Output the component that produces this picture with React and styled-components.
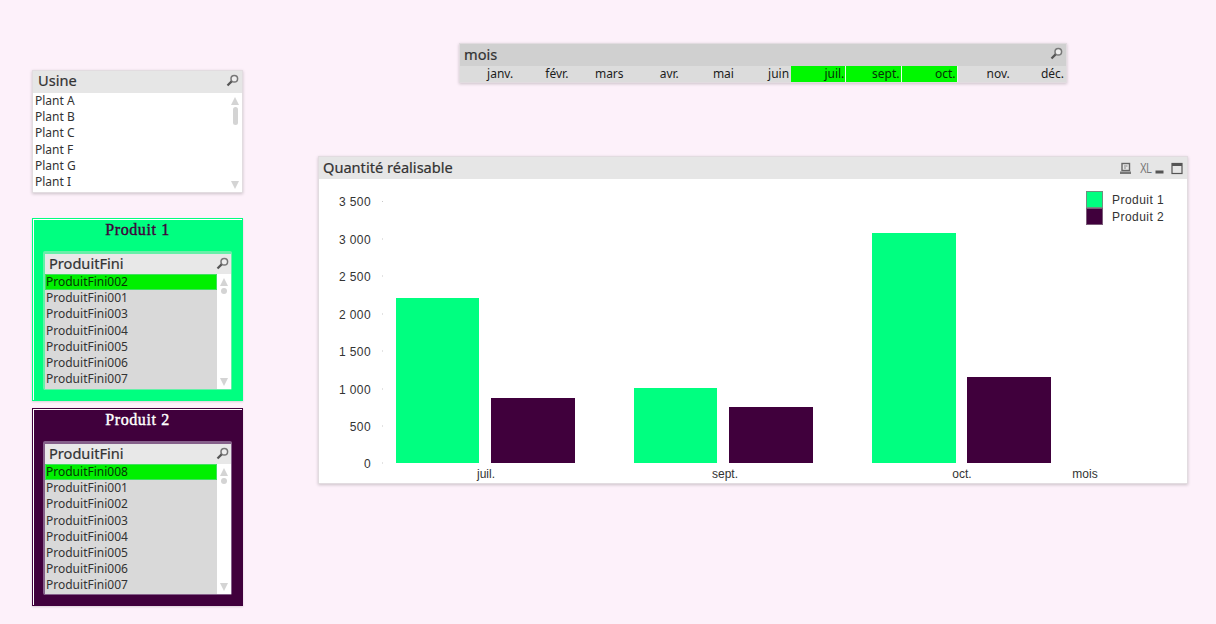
import React from 'react';
import styled, { createGlobalStyle } from 'styled-components';

const Global = createGlobalStyle`
  html, body { margin: 0; padding: 0; background: #fdf1fa; }
  #root { width: 1216px; height: 624px; overflow: hidden; }
`;

const Canvas = styled.main`
  position: relative;
  width: 1216px;
  height: 624px;
  background: #fdf1fa;
  font-family: "Noto Sans", "Liberation Sans", sans-serif;
  color: #222;
`;

const SheetObject = styled.section`
  position: absolute;
  left: ${p => p.$x}px;
  top: ${p => p.$y}px;
  width: ${p => p.$w}px;
  height: ${p => p.$h}px;
  box-sizing: border-box;
  display: flex;
  flex-direction: column;
  border: 1px solid #e2dce0;
  box-shadow: 0 1px 3px rgba(0, 0, 0, 0.2);
  background: ${p => p.$bg || '#fff'};
`;

const Caption = styled.header`
  flex: 0 0 ${p => p.$h || 22}px;
  box-sizing: border-box;
  display: flex;
  align-items: center;
  justify-content: space-between;
  padding: 0 ${p => p.$pr ?? 3}px ${p => p.$pb ?? 3}px ${p => p.$pl ?? 5}px;
  background: ${p => p.$bg || '#e6e6e6'};
  font-size: 14.6px;
  line-height: 18px;
  -webkit-text-stroke: 0.2px #333;
  color: #333;
`;

const SearchSvg = styled.svg`
  width: 13px;
  height: 13px;
  flex: none;
`;

const SearchIcon = () => (
  <SearchSvg viewBox="0 0 13 13">
    <circle cx="8.3" cy="4.7" r="3.3" fill="#eee" stroke="#777" strokeWidth="1.5" />
    <path d="M5.6 7.4 1.5 11.5" stroke="#555" strokeWidth="2.2" />
  </SearchSvg>
);

const ListBody = styled.div`
  flex: 1;
  display: flex;
  min-height: 0;
`;

const Rows = styled.ul`
  flex: 1;
  list-style: none;
  margin: 0;
  padding: 0;
  background: ${p => p.$bg || '#fff'};
  min-width: 0;
`;

const Row = styled.li`
  box-sizing: border-box;
  height: 16.2px;
  line-height: ${p => p.$lh || 16.2}px;
  padding-left: ${p => p.$pl || 2}px;
  font-size: 12px;
  white-space: nowrap;
  color: #333;
  ${p => p.$on && `
    background: #00f000;
    color: #063306;
    box-shadow: inset 0 0 0 1px #40e060;
  `}
`;

const ScrollBar = styled.div`
  flex: 0 0 ${p => p.$w}px;
  background: #fff;
  display: flex;
  flex-direction: column;
  align-items: center;
  padding: 4px 0 3px;
  box-sizing: border-box;
`;

const Arrow = styled.span`
  width: 0;
  height: 0;
  flex: none;
  border-left: 4px solid transparent;
  border-right: 4px solid transparent;
  ${p => (p.$down ? 'border-top: 8px solid #d4d4d4; margin-top: auto;' : 'border-bottom: 8px solid #d4d4d4;')}
`;

const Thumb = styled.span`
  flex: none;
  width: ${p => p.$w}px;
  height: ${p => p.$h}px;
  margin-top: 2px;
  background: #d4d4d4;
  border-radius: 3px;
`;

const ProductPanel = styled(SheetObject)`
  align-items: center;
  border: 1px solid ${p => p.$bg};
  box-shadow: inset 1px 1px 0 #fff, 0 1px 2px rgba(0, 0, 0, 0.14);
`;

const PanelTitle = styled.h2`
  flex: 0 0 32px;
  margin: 0;
  padding-top: 1px;
  box-sizing: border-box;
  width: 100%;
  text-align: center;
  font-family: "Liberation Serif", serif;
  font-size: 16px;
  line-height: 20px;
  font-weight: 400;
  letter-spacing: 0.6px;
  -webkit-text-stroke: 0.4px currentColor;
  color: ${p => p.$c};
`;

const InnerList = styled.div`
  width: 189px;
  height: ${p => p.$h}px;
  box-sizing: border-box;
  display: flex;
  flex-direction: column;
  border-style: solid;
  border-color: ${p => p.$edge};
  border-width: 3px 1px 1px 2px;
  border-radius: 2px;
  background: #fff;
`;

const MonthRow = styled.div`
  flex: 1;
  display: flex;
  background: #dcdcdc;
`;

const Month = styled.div`
  flex: ${p => (p.$basis ? `0 0 ${p.$basis}px` : '1 1 0')};
  box-sizing: border-box;
  text-align: right;
  padding-right: 2px;
  font-size: 12px;
  line-height: 15px;
  color: #1c1c1c;
  ${p => p.$on && `
    background: #00f800;
    box-shadow: inset -1px 0 0 #e8ffe8;
    color: #063306;
  `}
`;

const ChartCaptionTools = styled.div`
  display: flex;
  align-items: center;
  gap: 4px;
  margin-bottom: -3px;
`;

const ToolSvg = styled.svg`
  height: 13px;
  width: ${p => p.$w}px;
  display: block;
  margin-left: ${p => p.$ml || 0}px;
`;

const XlMark = styled.span`
  font-family: "Liberation Sans", sans-serif;
  font-size: 14px;
  line-height: 13px;
  letter-spacing: -0.5px;
  color: #777;
  -webkit-text-stroke: 0;
  transform: scaleX(0.72);
  transform-origin: center;
  width: 14px;
  margin: 0 -1px 0 2px;
`;

const ChartSvg = styled.svg`
  display: block;
  flex: 1;
  width: 100%;
  min-height: 0;
`;

const AxisText = styled.text`
  font-family: "Liberation Sans", sans-serif;
  font-size: 12px;
  letter-spacing: ${p => p.$ls || 0}px;
  fill: #333;
`;

const plants = ['Plant A', 'Plant B', 'Plant C', 'Plant F', 'Plant G', 'Plant I'];
const months = [
  ['janv.', 0, 55.2], ['févr.', 0, 55.2], ['mars', 0, 55.2], ['avr.', 0, 55.2], ['mai', 0, 55.2], ['juin', 0, 55.2],
  ['juil.', 1, 55.2], ['sept.', 1, 55.2], ['oct.', 1, 56], ['nov.'], ['déc.'],
];
const ticks = [
  ['3 500', 201.5], ['3 000', 239], ['2 500', 276], ['2 000', 314],
  ['1 500', 351], ['1 000', 389], ['500', 426], ['0', 463],
];
const bars = [
  [396, 83, 298, '#00ff80'], [491, 84, 398, '#40003c'],
  [634, 83, 388, '#00ff80'], [729, 84, 407, '#40003c'],
  [872, 84, 233, '#00ff80'], [967, 84, 377, '#40003c'],
];
const xLabels = [['juil.', 486], ['sept.', 725], ['oct.', 962], ['mois', 1085]];

function ProductList({ x, y, h, bg, titleColor, title, edge, listH, items }) {
  return (
    <ProductPanel $x={x} $y={y} $w={211} $h={h} $bg={bg}>
      <PanelTitle $c={titleColor}>{title}</PanelTitle>
      <InnerList $h={listH} $edge={edge}>
        <Caption $h={18} $pl={4} $pr={2} $pb={2} $bg="#e8e8e8">
          ProduitFini
          <SearchIcon />
        </Caption>
        <ListBody>
          <Rows $bg="#d9d9d9">
            {items.map((it, i) => (
              <Row key={it} $on={i === 0} $pl={1}>{it}</Row>
            ))}
          </Rows>
          <ScrollBar $w={14}>
            <Arrow />
            <Thumb $w={6} $h={6} />
            <Arrow $down />
          </ScrollBar>
        </ListBody>
      </InnerList>
    </ProductPanel>
  );
}

export default function App() {
  return (
    <Canvas>
      <Global />

      <SheetObject $x={32} $y={70} $w={211} $h={123}>
        <Caption $h={22} $pr={3} $pb={4}>
          Usine
          <SearchIcon />
        </Caption>
        <ListBody>
          <Rows>
            {plants.map(p => <Row key={p} $lh={15}>{p}</Row>)}
          </Rows>
          <ScrollBar $w={14}>
            <Arrow />
            <Thumb $w={5} $h={18} />
            <Arrow $down />
          </ScrollBar>
        </ListBody>
      </SheetObject>

      <ProductList
        x={32} y={218} h={183} bg="#00ff80" titleColor="#40003c" title="Produit 1"
        edge="#66f0a8" listH={139}
        items={['ProduitFini002', 'ProduitFini001', 'ProduitFini003', 'ProduitFini004', 'ProduitFini005', 'ProduitFini006', 'ProduitFini007']}
      />
      <ProductList
        x={32} y={408} h={198} bg="#40003c" titleColor="#ffffff" title="Produit 2"
        edge="#85608a" listH={154}
        items={['ProduitFini008', 'ProduitFini001', 'ProduitFini002', 'ProduitFini003', 'ProduitFini004', 'ProduitFini005', 'ProduitFini006', 'ProduitFini007']}
      />

      <SheetObject $x={459} $y={43} $w={608} $h={40} $bg="#dcdcdc">
        <Caption $h={22} $bg="#d0d0d0" $pl={4} $pr={3}>
          mois
          <SearchIcon />
        </Caption>
        <MonthRow>
          {months.map(([m, on, basis]) => <Month key={m} $on={on} $basis={basis}>{m}</Month>)}
        </MonthRow>
      </SheetObject>

      <SheetObject $x={318} $y={156} $w={870} $h={328}>
        <Caption $h={22} $pl={4} $pr={4}>
          Quantité réalisable
          <ChartCaptionTools>
            <ToolSvg $w={13} viewBox="0 0 13 13">
              <rect x="3" y="1.5" width="7.5" height="7" fill="none" stroke="#666" strokeWidth="1.4" />
              <path d="M5 4h3.5M5 6h2" stroke="#888" />
              <rect x="1" y="9.5" width="11" height="2.5" fill="#777" />
            </ToolSvg>
            <XlMark>XL</XlMark>
            <ToolSvg $w={9} viewBox="0 0 9 13">
              <rect x="0.5" y="8.5" width="8" height="3" fill="#555" />
            </ToolSvg>
            <ToolSvg $w={12} $ml={3} viewBox="0 0 12 13">
              <rect x="1" y="1.5" width="10" height="10" fill="none" stroke="#555" strokeWidth="1.2" />
              <rect x="1" y="1.5" width="10" height="2.5" fill="#555" />
            </ToolSvg>
          </ChartCaptionTools>
        </Caption>
        <ChartSvg viewBox="319 179 868 304">
          {ticks.map(([t, y]) => (
            <g key={t}>
              <AxisText $ls={0.4} x={371} y={y + 4.5} textAnchor="end">{t}</AxisText>
              <rect x={382} y={y - 0.5} width={1} height={1} fill="#c8c8c8" />
            </g>
          ))}
          {bars.map(([x, w, y, c]) => (
            <rect key={x} x={x} y={y} width={w} height={463 - y} fill={c} />
          ))}
          {xLabels.map(([t, x]) => (
            <AxisText key={t} x={x} y={478} textAnchor="middle">{t}</AxisText>
          ))}
          <rect x={1086.5} y={191.5} width={16} height={16} fill="#00ff80" stroke="#6f8f80" />
          <rect x={1086.5} y={208.5} width={16} height={16} fill="#40003c" stroke="#7a5c78" />
          <AxisText $ls={0.45} x={1112} y={203.5}>Produit 1</AxisText>
          <AxisText $ls={0.45} x={1112} y={220.5}>Produit 2</AxisText>
        </ChartSvg>
      </SheetObject>
    </Canvas>
  );
}
